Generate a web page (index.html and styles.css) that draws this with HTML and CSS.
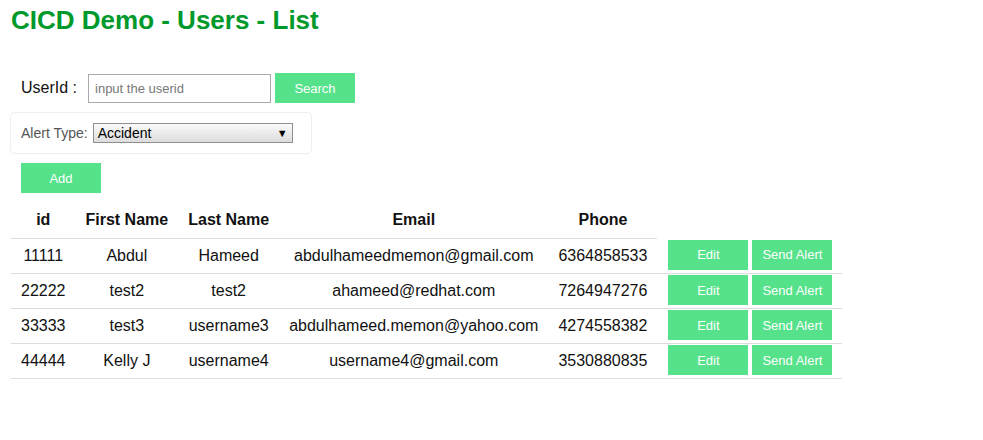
FILE: index.html
```html
<!DOCTYPE html>
<html>
<head>
<meta charset="utf-8">
<link rel="stylesheet" href="styles.css">
</head>
<body>
<div class="page">
  <h1 class="title">CICD Demo - Users - List</h1>
  <div class="search-row">
    <span class="label">UserId :</span>
    <input class="search-input" type="text" placeholder="input the userid">
    <button class="btn">Search</button>
  </div>
  <div class="alert-box">
    <span class="alert-label">Alert Type:</span>
    <div class="select">
      <span>Accident</span>
      <span class="arrow">▼</span>
    </div>
  </div>
  <button class="btn add-btn">Add</button>
  <table class="users">
    <thead>
      <tr><th>id</th><th>First Name</th><th>Last Name</th><th>Email</th><th>Phone</th><th class="empty"></th></tr>
    </thead>
    <tbody>
      <tr><td>11111</td><td>Abdul</td><td>Hameed</td><td>abdulhameedmemon@gmail.com</td><td>6364858533</td><td class="actions"><button class="btn">Edit</button><button class="btn">Send Alert</button></td></tr>
      <tr><td>22222</td><td>test2</td><td>test2</td><td>ahameed@redhat.com</td><td>7264947276</td><td class="actions"><button class="btn">Edit</button><button class="btn">Send Alert</button></td></tr>
      <tr><td>33333</td><td>test3</td><td>username3</td><td>abdulhameed.memon@yahoo.com</td><td>4274558382</td><td class="actions"><button class="btn">Edit</button><button class="btn">Send Alert</button></td></tr>
      <tr><td>44444</td><td>Kelly J</td><td>username4</td><td>username4@gmail.com</td><td>3530880835</td><td class="actions"><button class="btn">Edit</button><button class="btn">Send Alert</button></td></tr>
    </tbody>
  </table>
</div>
</body>
</html>
```
FILE: styles.css
```css
html, body {
  margin: 0;
  background: #fff;
  font-family: "Liberation Sans", Arial, sans-serif;
  color: #111;
}
.page {
  padding-left: 10px;
}
.title {
  margin: 6px 0 0 1px;
  font-size: 26px;
  font-weight: bold;
  color: #00992b;
  line-height: 29px;
}
.search-row {
  display: flex;
  align-items: center;
  margin-top: 38px;
  padding-left: 11px;
  height: 30px;
}
.label {
  font-size: 16px;
  margin-right: 11px;
}
.search-input {
  box-sizing: border-box;
  width: 183px;
  height: 29px;
  border: 1px solid #a9a9a9;
  padding: 0 6px;
  font-family: "Liberation Sans", Arial, sans-serif;
  font-size: 13px;
  margin: 1px 4px 0 0;
  outline: none;
}
.search-input::placeholder {
  color: #777;
}
.btn {
  box-sizing: border-box;
  width: 80px;
  height: 30px;
  border: none;
  background: #55e28a;
  color: #fff;
  font-family: "Liberation Sans", Arial, sans-serif;
  font-size: 13px;
  padding: 0;
  cursor: pointer;
}
.alert-box {
  box-sizing: border-box;
  display: flex;
  align-items: center;
  width: 302px;
  height: 42px;
  margin-top: 9px;
  padding-left: 10px;
  border: 1px solid #eeeeee;
  border-radius: 5px;
  box-shadow: 0 0 2px rgba(0,0,0,0.04);
}
.alert-label {
  font-size: 14px;
  color: #555;
  margin-right: 5px;
}
.select {
  box-sizing: border-box;
  display: flex;
  align-items: center;
  justify-content: space-between;
  width: 200px;
  height: 20px;
  border: 1px solid #8f8f8f;
  background: linear-gradient(#fbfbfb, #dcdcdc);
  padding: 0 4px 0 4px;
  font-size: 14px;
  color: #000;
}
.arrow {
  font-size: 11px;
  line-height: 1;
}
.add-btn {
  display: block;
  margin: 9px 0 0 11px;
}
.users {
  margin: 11px 0 0 1px;
  border-collapse: collapse;
  font-size: 16px;
}
.users th {
  font-weight: bold;
  padding: 7px 10px 9px;
  line-height: 18px;
  border-bottom: 1px solid #dddddd;
  text-align: center;
}
.users th.empty {
  border-bottom: none;
}
.users td {
  padding: 8px 10px;
  line-height: 18px;
  border-bottom: 1px solid #dddddd;
  text-align: center;
  white-space: nowrap;
}
.users td.actions {
  padding: 1px 10px 0 11px;
  vertical-align: top;
}
.actions .btn {
  vertical-align: top;
}
.actions .btn + .btn {
  margin-left: 4px;
}
```
